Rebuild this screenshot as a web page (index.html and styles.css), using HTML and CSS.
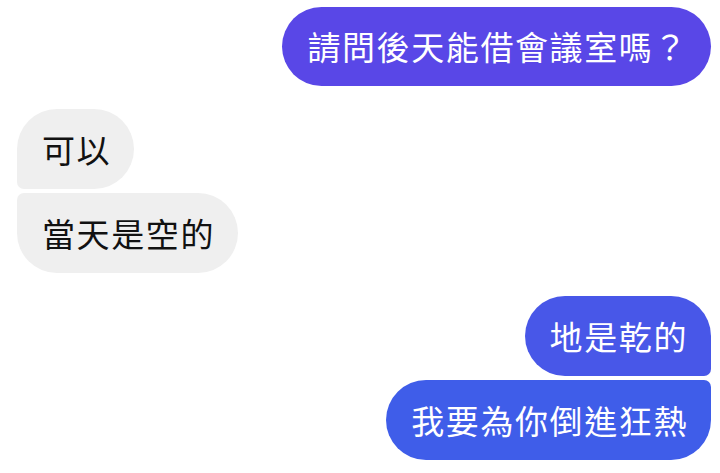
FILE: index.html
```html
<!DOCTYPE html>
<html>

<head>
  <title>Chat</title>
  <link rel="stylesheet" href="styles.css">
</head>

<body>
  <section class="chat">
    <div class="group outgoing">
      <div class="bubble sent first">請問後天能借會議室嗎？</div>
    </div>
    <div class="group incoming">
      <div class="bubble recv top">可以</div>
      <div class="bubble recv bottom">當天是空的</div>
    </div>
    <div class="group outgoing">
      <div class="bubble sent top">地是乾的</div>
      <div class="bubble sent bottom last">我要為你倒進狂熱</div>
    </div>
  </section>
</body>

</html>
```

FILE: styles.css
```css
* {
  margin: 0;
  padding: 0;
  box-sizing: border-box;
  font-family: "Noto Sans CJK TC", "Noto Sans", sans-serif;
}
:root {
  --gray-bubble: #efefef;
  --purple: #5947e7;
  --blue-1: #4857e8;
  --blue-2: #3f5de9;
}
body {
  background-color: #ffffff;
  width: 720px;
  height: 473px;
  overflow: hidden;
}
.chat {
  display: flex;
  flex-direction: column;
  gap: 23px;
  padding: 7px 9px 0 17px;
}
.group {
  display: flex;
  flex-direction: column;
  gap: 4px;
}
.outgoing {
  align-items: flex-end;
}
.incoming {
  align-items: flex-start;
}
.bubble {
  font-size: 33px;
  line-height: 40px;
  letter-spacing: 1.6px;
  padding: 20px 23px 20px 25px;
  border-radius: 40px;
  white-space: nowrap;
}
.sent {
  color: #ffffff;
  background-color: var(--blue-1);
}
.sent.first {
  background-color: var(--purple);
  padding-top: 19px;
  padding-bottom: 20px;
}
.sent.last {
  background-color: var(--blue-2);
}
.recv {
  color: #111111;
  background-color: var(--gray-bubble);
}
.outgoing .top {
  border-bottom-right-radius: 7px;
}
.outgoing .bottom {
  border-top-right-radius: 7px;
}
.incoming .top {
  border-bottom-left-radius: 7px;
}
.incoming .bottom {
  border-top-left-radius: 7px;
}
```
